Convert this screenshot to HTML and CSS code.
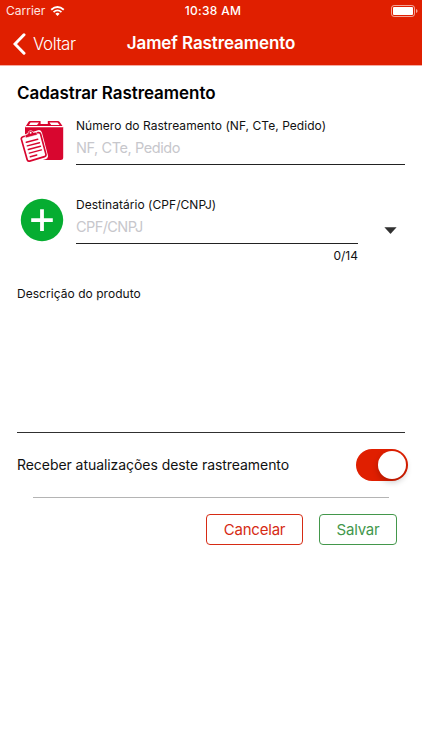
FILE: index.html
```html
<!DOCTYPE html>
<html lang="pt-BR">
<head>
<meta charset="utf-8">
<meta name="viewport" content="width=device-width, initial-scale=1">
<title>Jamef Rastreamento</title>
<link rel="stylesheet" href="styles.css">
</head>
<body>
<header class="header">
  <div class="status">
    <div class="carrier"><span class="carrier-name">Carrier</span>
      <svg class="wifi" width="15" height="12" viewBox="0 0 16 12" fill="none" stroke="#fff" stroke-width="2"><path d="M1.3 4.6Q8 -1.3 14.7 4.6M3.8 7.2Q8 3.5 12.2 7.2"/><path d="M5.7 8.8Q8 7 10.3 8.8L8 11.2Z" fill="#fff" stroke="none"/></svg>
    </div>
    <span class="time">10:38 AM</span>
    <svg class="battery" width="27" height="12" viewBox="0 0 27 12"><rect x=".5" y=".5" width="23" height="11" rx="2.6" fill="none" stroke="#fff" stroke-opacity=".6"/><rect x="2" y="2" width="20" height="8" rx="1" fill="#fff"/><path d="M25 4q1.6.5 1.6 2T25 8z" fill="#fff" fill-opacity=".6"/></svg>
  </div>
  <nav class="nav">
    <a class="back"><svg width="13" height="22" viewBox="0 0 13 22" fill="none" stroke="#fff" stroke-width="3" stroke-linecap="round"><path d="M11 1.8L2 11l9 9.2"/></svg><span class="back-label">Voltar</span></a>
    <h1 class="title">Jamef Rastreamento</h1>
  </nav>
</header>
<main class="form">
  <h2 class="heading">Cadastrar Rastreamento</h2>
  <section class="row tracking">
    <svg class="icon" width="44" height="44" viewBox="0 0 44 44">
      <path d="M10 2h28q1 0 1.7.9L43.2 8v30.5q0 2.5-2.5 2.5H5V8.5L8.4 3Q9 2 10 2z" fill="#d8062f"/>
      <path d="M10.5 3.4H19L17 5.9H9zM20.6 2h7.2v3.2h-7.2zM29.4 3.4h8.2l2 2.5h-8.4z" fill="#fff"/>
      <path d="M5.5 7.6h37.5" stroke="#fff" stroke-width="1.3"/>
      <path d="M18.5 5h11.5v1.3H18.5z" fill="#d8062f"/>
      <path d="M-1 17L18 11.2q3-.8 4 2.5L27.8 36q.7 3.2-2.3 4.2L8 45H-1z" fill="#fff"/>
      <path d="M3 17.8L18.2 13.7q1.9-.4 2.4 1.4l5.3 20q.5 1.9-1.4 2.5L9.6 42.1q-1.9.5-2.4-1.3L1.4 20.4q-.5-2 1.6-2.6z" fill="#fff" stroke="#d8062f" stroke-width="1.7"/>
      <path d="M5.7 19l-.7-2.9 3-1.3q-.1-2.9 2.3-3.2 2.3-.1 3 1.9l3.2-.3 1 2.6z" fill="#d8062f" stroke="#fff" stroke-width=".6"/>
      <circle cx="10.6" cy="13.8" r="1" fill="#fff"/>
      <path d="M6.3 23.3l11.5-3.1M7.3 26.9l12.2-3.2M8.3 30.5l12.2-3.2M9.3 34.1l12.2-3.2M10.3 37.7l6.5-1.7" stroke="#d8062f" stroke-width="1.4" stroke-linecap="round"/>
    </svg>
    <div class="field tracking-field"><label class="label l1">Número do Rastreamento (NF, CTe, Pedido)</label><div class="hint h1">NF, CTe, Pedido</div></div>
  </section>
  <section class="row recipient">
    <svg class="icon" width="44" height="44" viewBox="0 0 44 44"><circle cx="22" cy="22" r="21.2" fill="#06ad31"/><path d="M11.2 22.1h21.6M22 11.3v21.6" stroke="#fff" stroke-width="3.8"/></svg>
    <div class="recipient-body">
      <div class="field"><label class="label l2">Destinatário (CPF/CNPJ)</label><div class="hint h2">CPF/CNPJ</div></div>
      <div class="counter">0/14</div>
    </div>
    <svg class="caret" width="13" height="7" viewBox="0 0 13 7"><path d="M.4.3h12.2L6.9 6.5q-.4.4-.8 0z" fill="#303030"/></svg>
  </section>
  <section class="description"><label class="label l3">Descrição do produto</label></section>
  <section class="updates"><span class="updates-label">Receber atualizações deste rastreamento</span><div class="switch"><i class="knob"></i></div></section>
  <hr class="divider">
  <div class="actions"><button class="btn cancel"><span>Cancelar</span></button><button class="btn save"><span>Salvar</span></button></div>
</main>
</body>
</html>
```
FILE: styles.css
```css
* { box-sizing: border-box; }
body { margin: 0; height: 750px; background: #fff; color: #111; font-family: Inter, "Liberation Sans", sans-serif; overflow: hidden; }
h1, h2 { margin: 0; font-weight: 600; }
svg { display: block; flex: none; }
span, label { white-space: nowrap; }
.header { height: 66px; background: #e01f00; color: #fff; border-bottom: 1px solid #f5aaa0; }
.status { height: 22px; display: grid; grid-template-columns: 1fr auto 1fr; align-items: center; padding: 0 4px 0 6px; font-size: 12px; }
.status span { line-height: 14px; }
.carrier { display: flex; align-items: center; gap: 5px; color: #ffe6e1; }
.wifi { margin-bottom: 1px; }
.time { font-weight: 500; letter-spacing: .3px; padding-left: 2px; }
.battery { justify-self: end; margin-bottom: 1px; }
.nav { height: 43px; display: grid; grid-template-columns: 1fr auto 1fr; align-items: center; padding: 0 13px; }
.back { display: flex; align-items: center; gap: 7px; font-size: 17px; letter-spacing: -.5px; font-weight: 300; }
.title { font-size: 17px; letter-spacing: -.1px; padding-bottom: 1px; }
.form { padding: 0 17px; }
.heading { margin-top: 16px; height: 22px; line-height: 22px; font-size: 17px; letter-spacing: -.06px; color: #000; }
.row { display: flex; align-items: flex-start; padding-left: 3px; }
.tracking { margin-top: 14px; height: 79px; }
.tracking .icon { margin-top: 1px; }
.field { height: 47px; border-bottom: 1.5px solid #222; }
.tracking-field { width: 330px; }
.icon { margin-right: 12px; }
.label { display: block; height: 16px; line-height: 16px; font-size: 12px; }
.l1 { letter-spacing: .05px; }
.l2, .l3 { letter-spacing: .04px; }
.hint { height: 24px; margin-top: 2px; line-height: 24px; font-size: 14.5px; color: #c7c7cc; }
.h1 { letter-spacing: -.42px; }
.h2 { letter-spacing: -.58px; }
.recipient .icon { margin-top: 1px; }
.recipient-body { width: 282px; }
.counter { height: 24px; line-height: 24px; font-size: 12px; text-align: right; }
.caret { margin: 30px 0 0 26px; }
.description { margin-top: 18px; height: 147px; border-bottom: 1.5px solid #303030; }
.updates { display: flex; align-items: center; justify-content: space-between; height: 64px; font-size: 14px; letter-spacing: -.06px; margin-right: -2.5px; }
.updates-label { padding-bottom: 1px; }
.switch { width: 52px; height: 32px; border-radius: 16px; background: #e01f00; display: flex; justify-content: flex-end; align-items: center; padding-right: 1.5px; }
.knob { width: 28.5px; height: 28.5px; border-radius: 50%; background: #fff; box-shadow: 0 3px 6px rgba(0,0,0,.22); }
.divider { margin: 0 16px; border: 0; border-top: 1px solid #b4b4b4; }
.actions { display: flex; justify-content: flex-end; gap: 16px; padding-right: 8px; margin-top: 16px; }
.btn { height: 31px; padding: 0; border: 1.3px solid; border-radius: 4px; background: #fff; font-family: inherit; font-size: 15px; letter-spacing: -.2px; }
.cancel { width: 97px; color: #d62b14; }
.save { width: 78px; color: #43974b; }
```
